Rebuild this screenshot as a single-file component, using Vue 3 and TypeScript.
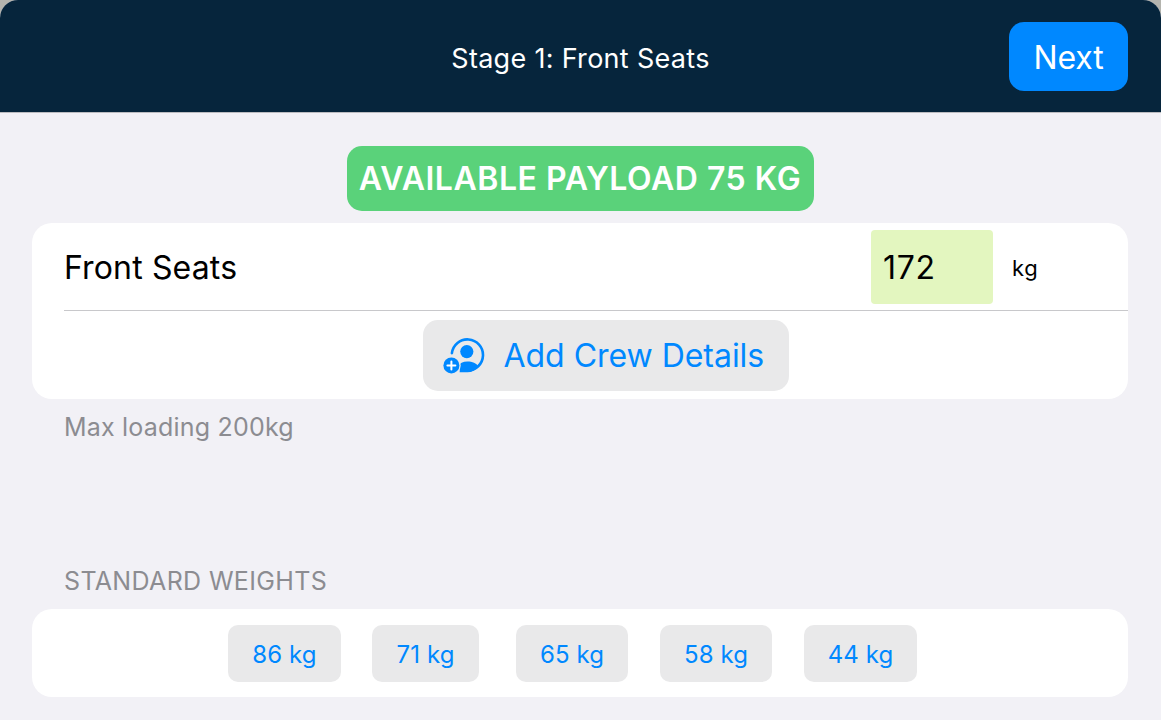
<script setup lang="ts">
const weights: { label: string; cls: string }[] = [
  { label: '86 kg', cls: 'w1' },
  { label: '71 kg', cls: 'w2' },
  { label: '65 kg', cls: 'w3' },
  { label: '58 kg', cls: 'w3' },
  { label: '44 kg', cls: 'w1' },
]
</script>

<template>
  <div class="app">
    <header class="bar">
      <div class="title">Stage 1: Front Seats</div>
      <button class="next">Next</button>
    </header>
    <main class="content">
      <div class="badge-row"><div class="badge">AVAILABLE PAYLOAD 75 KG</div></div>
      <section class="card main-card">
        <div class="seat-row">
          <div class="seat-label">Front Seats</div>
          <div class="field">172</div>
          <div class="unit">kg</div>
        </div>
        <div class="crew-row">
          <button class="crew">
            <svg class="crew-icon" viewBox="0 0 42 36" width="42" height="36" aria-hidden="true">
              <path d="M8.9 15.2A15.6 15.6 0 1 1 24.4 32.6" fill="none" stroke="#0088ff" stroke-width="2.6" stroke-linecap="round" />
              <circle cx="23.8" cy="13.6" r="6.6" fill="#0088ff" />
              <path d="M15 28.4C16.6 25.4 20 23.6 24.4 23.6C29.4 23.6 33.4 25.6 35.4 28.4C32.4 32 28.4 34.2 24.4 34.2H16.6C17.2 32 16.6 30 15 28.4Z" fill="#0088ff" />
              <circle cx="8.4" cy="27.4" r="9.3" fill="#e9e9ea" />
              <circle cx="8.4" cy="27.4" r="8" fill="#0088ff" />
              <path d="M4.4 27.4H12.4M8.4 23.4V31.4" stroke="#fff" stroke-width="2" stroke-linecap="round" />
            </svg>
            <span>Add Crew Details</span>
          </button>
        </div>
      </section>
      <div class="note">Max loading 200kg</div>
      <div class="section-head">STANDARD WEIGHTS</div>
      <section class="card weights">
        <button v-for="w in weights" :key="w.label" class="chip" :class="w.cls">{{ w.label }}</button>
      </section>
    </main>
  </div>
</template>

<style scoped>
.app {
  width: 1161px;
  height: 720px;
  display: flex;
  flex-direction: column;
  overflow: hidden;
  border-radius: 18px 18px 0 0;
  background: #f2f1f6;
  font-family: Inter, "Liberation Sans", sans-serif;
}
.bar {
  flex: none;
  height: 112px;
  box-sizing: content-box;
  border-bottom: 1px solid #bcbcc0;
  background: #06253c;
  position: relative;
  display: flex;
  align-items: center;
  justify-content: flex-end;
  padding-right: 33px;
}
.title {
  position: absolute;
  left: 0;
  right: 0;
  top: 42px;
  text-align: center;
  color: #fff;
  font-size: 27px;
  line-height: 34px;
  letter-spacing: 0.3px;
}
.next {
  width: 119px;
  height: 69px;
  border: none;
  border-radius: 15px;
  background: #0088ff;
  color: #fff;
  font: inherit;
  font-size: 32px;
  padding: 2px 0 0;
  margin-top: 1px;
  letter-spacing: -0.2px;
}
.content {
  flex: 1;
  display: flex;
  flex-direction: column;
  padding: 33px 33px 0 32px;
}
.badge-row {
  display: flex;
  justify-content: center;
}
.badge {
  width: 467px;
  height: 65px;
  border-radius: 15px;
  background: #5ad27a;
  color: #fff;
  font-size: 32px;
  font-weight: 600;
  line-height: 65px;
  text-align: center;
  white-space: nowrap;
  letter-spacing: 0.53px;
}
.card {
  background: #fff;
  border-radius: 20px;
}
.main-card {
  margin-top: 12px;
  height: 176px;
}
.seat-row {
  height: 87px;
  margin-left: 32px;
  border-bottom: 1px solid #c8c8cb;
  display: flex;
  align-items: flex-start;
}
.seat-label {
  width: 807px;
  padding-top: 24px;
  font-size: 32px;
  line-height: 42px;
  color: #000;
  letter-spacing: 0.15px;
}
.field {
  margin-top: 7px;
  width: 122px;
  height: 74px;
  box-sizing: border-box;
  padding: 1px 0 0 12px;
  border-radius: 4px;
  background: #e3f6bf;
  font-size: 32px;
  line-height: 74px;
  color: #000;
  letter-spacing: 0.7px;
}
.unit {
  margin-left: 19px;
  padding-top: 30px;
  font-size: 22px;
  line-height: 30px;
  color: #000;
  letter-spacing: 0.6px;
}
.crew-row {
  display: flex;
  justify-content: center;
  padding-top: 9px;
  padding-left: 52px;
  padding-right: 1px;
}
.crew {
  width: 366px;
  height: 71px;
  border: none;
  border-radius: 15px;
  background: #e9e9ea;
  color: #0088ff;
  font: inherit;
  font-size: 32px;
  letter-spacing: -0.03px;
  display: flex;
  align-items: center;
  padding: 0 0 0 20px;
  gap: 19px;
}
.crew-icon {
  flex: none;
}
.note {
  margin: 13px 0 0 32px;
  font-size: 25px;
  line-height: 30px;
  color: #8c8c91;
  letter-spacing: 0.2px;
}
.section-head {
  margin: 124px 0 0 32px;
  font-size: 25px;
  line-height: 30px;
  color: #8c8c91;
  letter-spacing: 0.35px;
}
.weights {
  margin-top: 13px;
  height: 88px;
  display: flex;
  align-items: center;
  gap: 31px;
  padding-left: 196px;
  box-sizing: border-box;
}
.chip {
  height: 57px;
  border: none;
  border-radius: 10px;
  background: #e9e9ea;
  color: #0088ff;
  font: inherit;
  font-size: 24px;
  padding: 2px 0 0;
  letter-spacing: 0.1px;
}
.w1 { width: 113px; }
.w2 { width: 107px; margin-right: 6px; }
.w3 { width: 112px; margin-right: 1px; }
</style>

<style>
html, body {
  margin: 0;
  background: #b4b4ae;
}
</style>
